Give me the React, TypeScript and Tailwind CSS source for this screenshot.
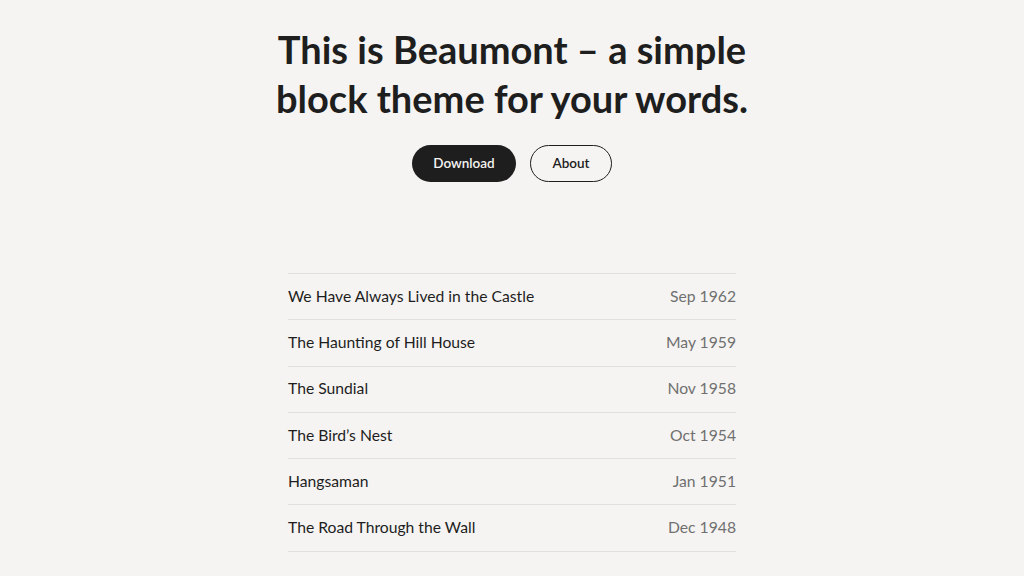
const POSTS = [
  { title: "We Have Always Lived in the Castle", date: "Sep 1962" },
  { title: "The Haunting of Hill House", date: "May 1959" },
  { title: "The Sundial", date: "Nov 1958" },
  { title: "The Bird’s Nest", date: "Oct 1954" },
  { title: "Hangsaman", date: "Jan 1951" },
  { title: "The Road Through the Wall", date: "Dec 1948" },
];

export default function App() {
  return (
    <div
      className="min-h-[576px] bg-[#f5f4f2] text-[#1e1e1e] flex flex-col items-center"
      style={{ fontFamily: "Lato, 'Noto Sans', sans-serif" }}
    >
      {/* Hero */}
      <h1 className="mt-[25px] text-center text-[38px] leading-[49px] font-bold">
        This is Beaumont – a simple
        <br />
        block theme for your words.
      </h1>

      <div className="mt-[22px] flex gap-[14px]">
        <a className="w-[104px] h-[37px] rounded-full bg-[#1e1e1e] text-[#f5f4f2] text-[13.5px] font-semibold flex items-center justify-center">
          Download
        </a>
        <a className="w-[82px] h-[37px] rounded-full border-[1.5px] border-[#1e1e1e] text-[13.5px] font-semibold flex items-center justify-center">
          About
        </a>
      </div>

      {/* Post list */}
      <ul className="mt-[91px] w-[448px] border-t border-[#e2e0dd]">
        {POSTS.map((p) => (
          <li
            key={p.title}
            className="h-[46.3px] border-b border-[#e2e0dd] flex items-center justify-between text-[15.7px]"
          >
            <span>{p.title}</span>
            <span className="text-[#707070]">{p.date}</span>
          </li>
        ))}
      </ul>
    </div>
  );
}
